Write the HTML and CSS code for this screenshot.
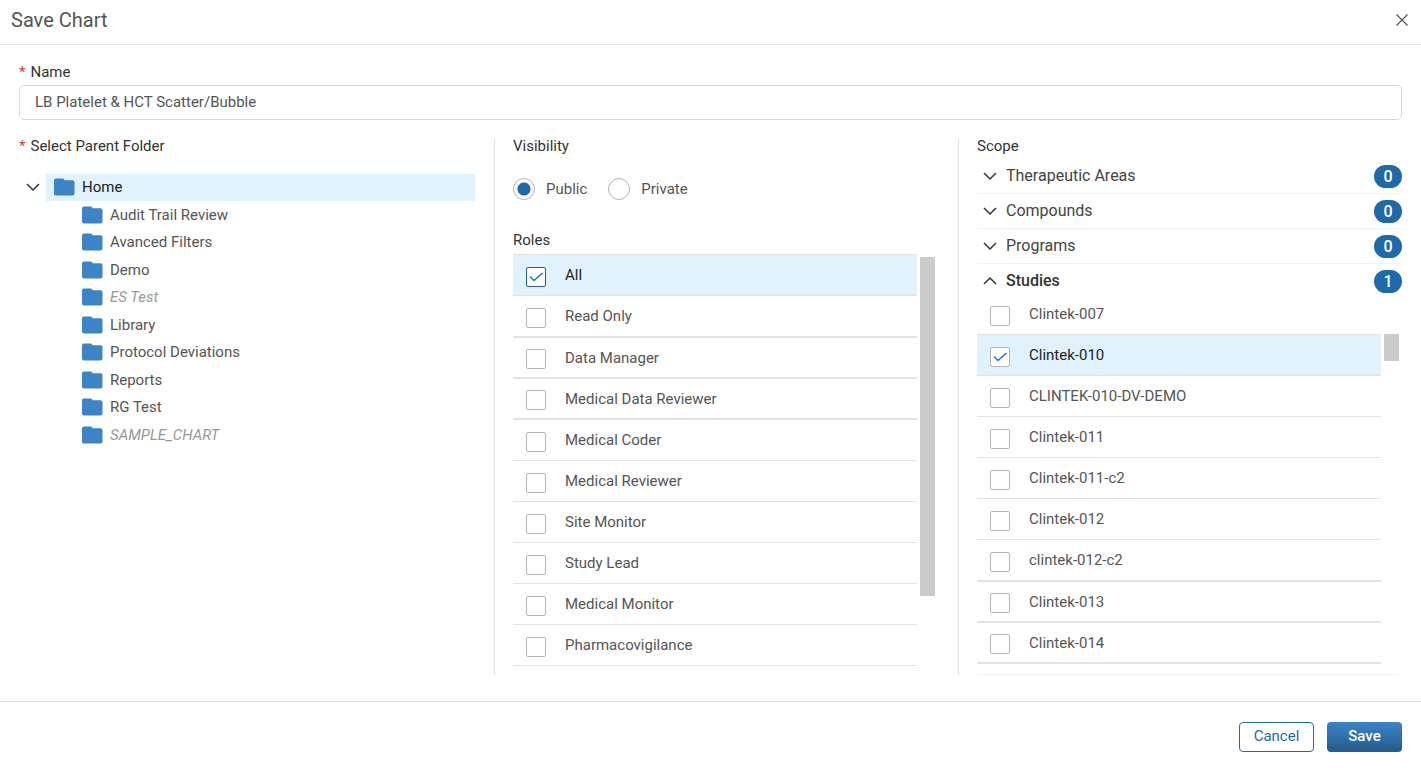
FILE: index.html
```html
<!DOCTYPE html>
<html lang="en">
<head>
    <meta charset="UTF-8">
    <meta name="viewport" content="width=device-width, initial-scale=1.0">
    <title>Save Chart</title>
    <link rel="stylesheet" href="styles.css">
</head>
<body>
    <svg class="sprite" aria-hidden="true">
        <symbol id="folder" viewBox="0 0 21 18">
            <path d="M2 0.5h6.600c.8 0 1.100.3 1.500 1l.4.7h8c1.200 0 2 .8 2 2v11.300c0 1.200-.8 2-2 2H2c-1.200 0-2-.8-2-2v-13c0-1.200.8-2 2-2z" fill="#3c84c6"/>
        </symbol>
        <symbol id="chevron" viewBox="0 0 14 14">
            <path d="M1 4l6 6 6-6" fill="none" stroke="#333" stroke-width="1.5"/>
        </symbol>
    </svg>

    <form class="dialog">
        <header class="dialog-header">
            <h1>Save Chart</h1>
            <button type="button" class="close-btn" aria-label="Close">
                <svg width="12" height="12" viewBox="0 0 12 12"><path d="M.5.5l11 11M11.5.5l-11 11" stroke="#555" stroke-width="1.2"/></svg>
            </button>
        </header>

        <main class="dialog-body">
            <label class="name-label" for="chartName"><span class="required">*</span>Name</label>
            <input class="name-input" type="text" id="chartName" value="LB Platelet &amp; HCT Scatter/Bubble">

            <div class="columns">
                <section class="column">
                    <h2><span class="required">*</span>Select Parent Folder</h2>
                    <div class="tree">
                        <div class="tree-root">
                            <button type="button" class="toggle" aria-label="Collapse Home"><svg class="chevron"><use href="#chevron"/></svg></button>
                            <button type="button" class="folder selected"><svg class="folder-icon"><use href="#folder"/></svg>Home</button>
                        </div>
                        <ul class="tree-children">
                            <li><button type="button" class="folder"><svg class="folder-icon"><use href="#folder"/></svg>Audit Trail Review</button></li>
                            <li><button type="button" class="folder"><svg class="folder-icon"><use href="#folder"/></svg>Avanced Filters</button></li>
                            <li><button type="button" class="folder"><svg class="folder-icon"><use href="#folder"/></svg>Demo</button></li>
                            <li><button type="button" class="folder private"><svg class="folder-icon"><use href="#folder"/></svg>ES Test</button></li>
                            <li><button type="button" class="folder"><svg class="folder-icon"><use href="#folder"/></svg>Library</button></li>
                            <li><button type="button" class="folder"><svg class="folder-icon"><use href="#folder"/></svg>Protocol Deviations</button></li>
                            <li><button type="button" class="folder"><svg class="folder-icon"><use href="#folder"/></svg>Reports</button></li>
                            <li><button type="button" class="folder"><svg class="folder-icon"><use href="#folder"/></svg>RG Test</button></li>
                            <li><button type="button" class="folder private"><svg class="folder-icon"><use href="#folder"/></svg>SAMPLE_CHART</button></li>
                        </ul>
                    </div>
                </section>

                <section class="column">
                    <h2>Visibility</h2>
                    <div class="radios">
                        <label><input type="radio" name="visibility" checked>Public</label>
                        <label><input type="radio" name="visibility">Private</label>
                    </div>
                    <h2>Roles</h2>
                    <div class="scroll-area roles-area">
                        <div class="options roles">
                            <label class="option checked"><input type="checkbox" class="focused" checked>All</label>
                            <label class="option heavy"><input type="checkbox">Read Only</label>
                            <label class="option heavy"><input type="checkbox">Data Manager</label>
                            <label class="option heavy"><input type="checkbox">Medical Data Reviewer</label>
                            <label class="option"><input type="checkbox">Medical Coder</label>
                            <label class="option"><input type="checkbox">Medical Reviewer</label>
                            <label class="option"><input type="checkbox">Site Monitor</label>
                            <label class="option"><input type="checkbox">Study Lead</label>
                            <label class="option"><input type="checkbox">Medical Monitor</label>
                            <label class="option"><input type="checkbox">Pharmacovigilance</label>
                        </div>
                        <div class="scrollbar"><div class="thumb thumb-roles"></div></div>
                    </div>
                </section>

                <section class="column scope">
                    <h2>Scope</h2>
                    <button type="button" class="group"><svg class="chevron"><use href="#chevron"/></svg>Therapeutic Areas<span class="badge">0</span></button>
                    <button type="button" class="group"><svg class="chevron"><use href="#chevron"/></svg>Compounds<span class="badge">0</span></button>
                    <button type="button" class="group"><svg class="chevron"><use href="#chevron"/></svg>Programs<span class="badge">0</span></button>
                    <button type="button" class="group open" aria-expanded="true"><svg class="chevron"><use href="#chevron"/></svg>Studies<span class="badge">1</span></button>
                    <div class="scroll-area studies">
                        <div class="options">
                            <label class="option"><input type="checkbox">Clintek-007</label>
                            <label class="option checked"><input type="checkbox" checked>Clintek-010</label>
                            <label class="option"><input type="checkbox">CLINTEK-010-DV-DEMO</label>
                            <label class="option"><input type="checkbox">Clintek-011</label>
                            <label class="option"><input type="checkbox">Clintek-011-c2</label>
                            <label class="option"><input type="checkbox">Clintek-012</label>
                            <label class="option heavy"><input type="checkbox">clintek-012-c2</label>
                            <label class="option heavy"><input type="checkbox">Clintek-013</label>
                            <label class="option heavy"><input type="checkbox">Clintek-014</label>
                        </div>
                        <div class="scrollbar"><div class="thumb thumb-studies"></div></div>
                    </div>
                </section>
            </div>
        </main>

        <footer class="dialog-footer">
            <button type="button" class="btn">Cancel</button>
            <button type="button" class="btn primary">Save</button>
        </footer>
    </form>
</body>
</html>
```

FILE: styles.css
```css
* {
    margin: 0;
    padding: 0;
    box-sizing: border-box;
}

body {
    font-family: Roboto, "Liberation Sans", sans-serif;
    font-size: 15px;
    line-height: 20px;
    color: #555;
    background: #fff;
}

button, input {
    font: inherit;
    color: inherit;
    background: none;
    border: none;
}

button, label {
    cursor: pointer;
}

.sprite {
    display: none;
}

.dialog {
    display: flex;
    flex-direction: column;
    height: 100vh;
}

.dialog-header {
    display: flex;
    align-items: center;
    justify-content: space-between;
    padding: 8px 13px 12px 11px;
    border-bottom: 1px solid #e3e3e3;
}

h1 {
    font-size: 20px;
    font-weight: 400;
    line-height: 24px;
}

.close-btn {
    display: flex;
}

.dialog-body {
    flex: 1;
    min-height: 0;
    display: flex;
    flex-direction: column;
    padding: 17px 19px 26px;
}

.name-label, h2 {
    color: #333;
    font-size: 15px;
    font-weight: 400;
}

.required {
    color: #d43f2e;
    margin-right: 5px;
}

.name-input {
    width: 100%;
    height: 35px;
    margin-top: 3px;
    padding: 0 15px 2px;
    border: 1px solid #d9d9d9;
    border-radius: 5px;
}

/* three panels */
.columns {
    flex: 1;
    min-height: 0;
    display: grid;
    grid-template-columns: 476fr 464fr 443fr;
    grid-template-rows: minmax(0, 1fr);
    margin-top: 19px;
}

.column {
    display: flex;
    flex-direction: column;
    min-width: 0;
    padding: 0 19px 0 18px;
    border-right: 1px solid #e0e0e0;
}

.column:first-child {
    padding-left: 0;
}

.column:last-child {
    padding-right: 0;
    border-right: none;
}

h2 {
    line-height: 15px;
}

/* folder tree */
.tree {
    margin-top: 20px;
}

.tree-root {
    display: flex;
}

.toggle {
    display: flex;
    flex: none;
    align-items: center;
    justify-content: center;
    width: 27px;
    padding-bottom: 2px;
}

.chevron {
    width: 14px;
    height: 14px;
}

.folder {
    display: flex;
    align-items: center;
    gap: 7px;
    width: 100%;
    height: 27px;
    padding-bottom: 2px;
    text-align: left;
}

.folder-icon {
    width: 21px;
    height: 18px;
}

.folder.selected {
    padding-left: 8px;
    color: #222;
    background: #dff2fe;
}

.folder.private {
    color: #999;
    font-style: italic;
}

.tree-children {
    list-style: none;
    padding-left: 63px;
}

.tree-children li:nth-child(odd) {
    padding-top: 1px;
}

/* visibility */
.radios {
    display: flex;
    gap: 21px;
    margin: 24px 0 33px;
}

.radios label {
    display: flex;
    align-items: center;
    gap: 11px;
}

input[type="radio"] {
    appearance: none;
    width: 22px;
    height: 22px;
    border: 1px solid #b5b5b5;
    border-radius: 50%;
}

input[type="radio"]:checked {
    background: radial-gradient(circle, #1f69a9 6px, #fff 7px);
}

/* checkbox lists */
.scroll-area {
    flex: 1;
    min-height: 0;
    display: flex;
    gap: 3px;
    overflow: hidden;
}

.roles-area {
    margin-right: 4px;
}

.options {
    flex: 1;
}

.roles {
    margin-top: 6px;
    border-top: 1px solid #e3e3e3;
}

.option {
    display: flex;
    align-items: center;
    gap: 19px;
    height: 41px;
    padding-left: 13px;
    border-bottom: 1px solid #e3e3e3;
}

.option.heavy {
    border-bottom-width: 2px;
}

.option:not(.heavy) + .heavy {
    height: 42px;
}

.option.checked {
    color: #222;
    background: #dff2fe;
}

input[type="checkbox"] {
    appearance: none;
    width: 20px;
    height: 20px;
    margin-top: 3px;
    background: #fff;
    border: 1px solid #b5b5b5;
    border-radius: 2px;
}

input[type="checkbox"]:checked {
    background: #fff url("data:image/svg+xml,%3Csvg xmlns='http://www.w3.org/2000/svg' viewBox='0 0 18 18'%3E%3Cpath d='M3 8.500l4 4L15.500 5' fill='none' stroke='%232a72b5' stroke-width='1.500'/%3E%3C/svg%3E");
}

input[type="checkbox"].focused {
    border-color: #1f5f99;
}

.scrollbar {
    width: 15px;
}

.thumb {
    background: #cbcbcb;
}

.thumb-roles {
    height: 339px;
    margin-top: 9px;
}

.thumb-studies {
    height: 27px;
    margin-top: 40px;
}

/* scope */
.scope .group {
    display: flex;
    align-items: center;
    gap: 9px;
    height: 35px;
    padding: 0 0 1px 6px;
    font-size: 16px;
    color: #444;
    border-bottom: 1px solid #f2f2f2;
}

.scope h2 {
    margin-bottom: 5px;
}

.scope .group.open {
    height: 30px;
    padding-top: 4px;
    font-weight: 500;
    color: #333;
    border-bottom: none;
}

.group.open .chevron {
    transform: rotate(180deg);
}

.badge {
    width: 28px;
    margin: 2px 0 0 auto;
    line-height: 23px;
    font-weight: 500;
    text-align: center;
    color: #fff;
    background: #1f69a9;
    border-radius: 12px;
}

.studies {
    margin-right: 3px;
    border-bottom: 1px solid #f2f2f2;
}

/* footer */
.dialog-footer {
    display: flex;
    justify-content: flex-end;
    gap: 13px;
    padding: 20px 19px 16px;
    border-top: 1px solid #e3e3e3;
}

.btn {
    width: 75px;
    height: 30px;
    padding-bottom: 2px;
    color: #1f69a9;
    border: 1px solid #1f69a9;
    border-radius: 4px;
}

.btn.primary {
    font-weight: 500;
    color: #fff;
    background: linear-gradient(#3c84c6, #235a8b);
    border: none;
}
```
